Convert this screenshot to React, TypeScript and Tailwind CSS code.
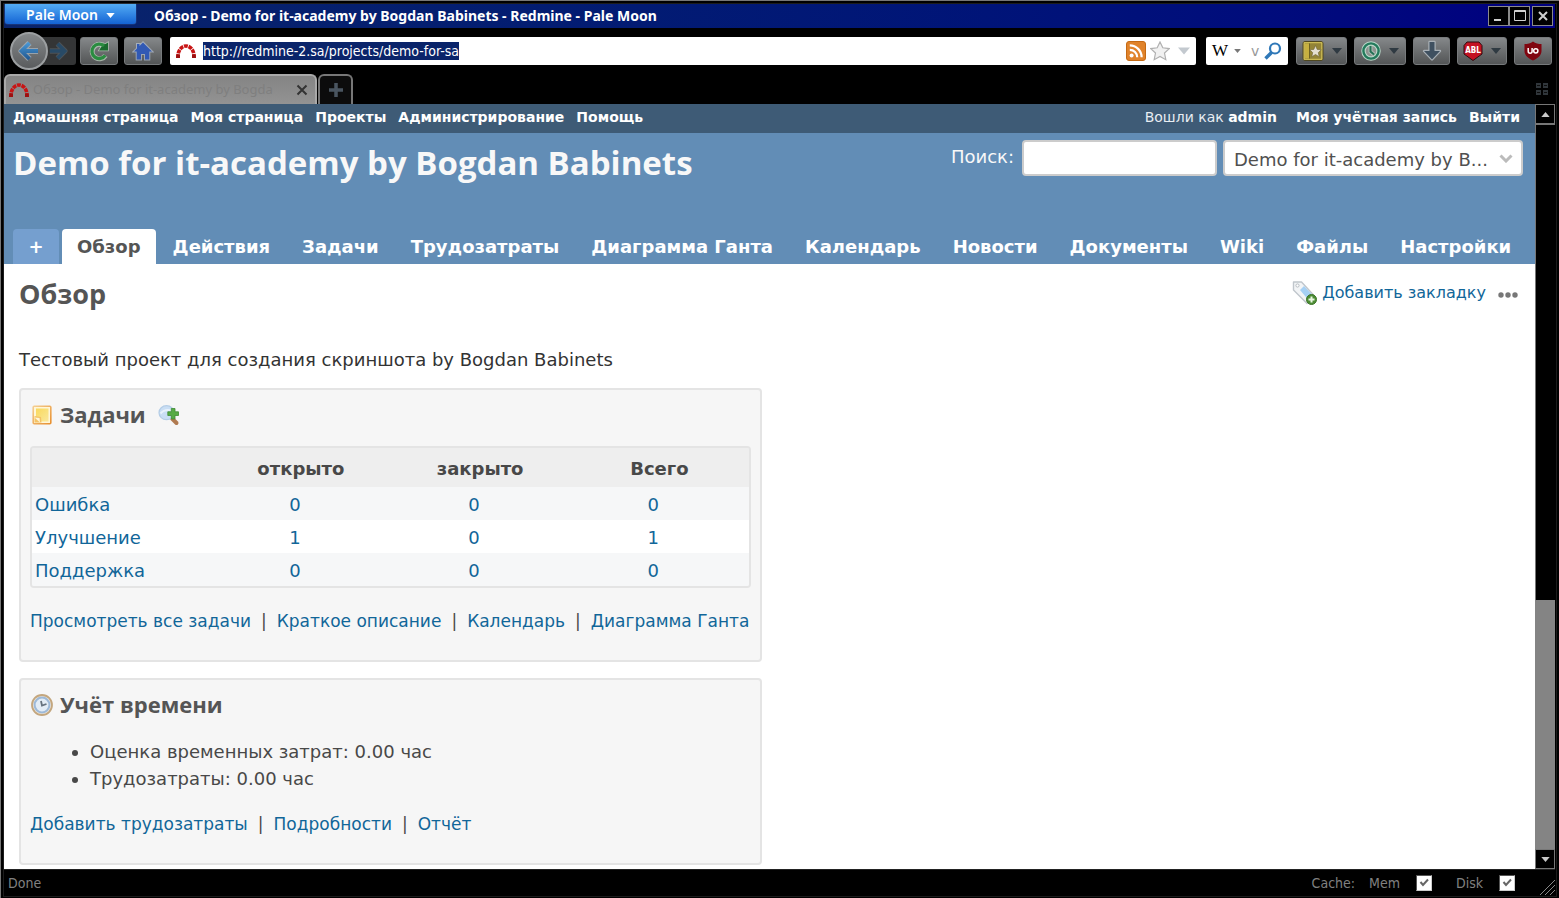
import type { ReactNode } from "react";

const toolButton =
  "flex h-7 items-center justify-center gap-2 rounded-[3px] border border-[#777a7c] bg-linear-to-b from-[#85888a] to-[#535556]";

function RedmineIcon() {
  return (
    <svg viewBox="0 0 20 14" className="h-[14px] w-5 shrink-0" fill="none">
      <path d="M2 14 V12 A8 10 0 0 1 18 12 V14" stroke="#c81414" strokeWidth="3.6" strokeDasharray="3.9 0.78" />
      <path d="M0 14l.3-3.600h3.700V14zM16 14v-3.600h3.700L20 14z" fill="#9c1010" />
    </svg>
  );
}

function Caret({ className }: { className: string }) {
  return (
    <svg viewBox="0 0 10 6" className={className}>
      <path d="M0 0h10L5 6z" fill="currentColor" />
    </svg>
  );
}

function ArrowIcon({ flip, className }: { flip?: boolean; className: string }) {
  const d = "M12.500 3 L4.500 11 L12.500 19 M5 11 H21";
  return (
    <svg viewBox="0 0 24 22" className={className} fill="none">
      <defs>
        <linearGradient id="arrow" gradientUnits="userSpaceOnUse" x1="0" y1="2" x2="0" y2="20">
          <stop offset="0" stopColor="#4a9ad8" />
          <stop offset="1" stopColor="#1f558e" />
        </linearGradient>
      </defs>
      <g transform={flip ? "matrix(-1 0 0 1 24 0)" : undefined}>
        <path d={d} stroke={flip ? "#66717a" : "#c3d4e2"} strokeWidth="6" strokeOpacity="0.5" strokeLinejoin="round" />
        <path d={d} stroke={flip ? "#284a66" : "url(#arrow)"} strokeWidth="3.800" />
      </g>
    </svg>
  );
}

function ReloadIcon() {
  return (
    <svg viewBox="0 0 22 22" className="size-[22px]" fill="none">
      <path d="M17.500 15.500 A7.200 7.200 0 1 1 14.500 5" stroke="#d5ead5" strokeOpacity="0.6" strokeWidth="5" />
      <path d="M11 10.500h9V2.500l-2.500 1.500-2-.5z" fill="#1a6a2e" stroke="#d5ead5" strokeOpacity="0.6" strokeWidth="1.600" paintOrder="stroke" />
      <path d="M17.200 15.300 A7.200 7.200 0 1 1 16 6" stroke="#2a8c40" strokeWidth="3.200" />
    </svg>
  );
}

function HomeIcon() {
  return (
    <svg viewBox="0 0 22 22" className="size-[22px]">
      <path
        d="M11 2.500 L20 11.500 H17.300 V19.500 H13 V14 H9 V19.500 H4.700 V11.500 H2 L5 8.500 V4 H7.500 V6 Z"
        fill="#3159b4"
        stroke="#c2cee2"
        strokeOpacity="0.6"
        strokeWidth="2"
        paintOrder="stroke"
      />
    </svg>
  );
}

function RssIcon() {
  return (
    <svg viewBox="0 0 20 20" className="size-5">
      <rect x="0.500" y="0.500" width="19" height="19" rx="2.500" fill="#e0832b" stroke="#c56a14" />
      <circle cx="5.600" cy="14.600" r="2" fill="#fff" />
      <path d="M3.800 8.800a7.400 7.400 0 0 1 7.400 7.400M3.800 4.400A11.800 11.800 0 0 1 15.600 16.200" fill="none" stroke="#fff" strokeWidth="2.200" />
    </svg>
  );
}

function StarIcon() {
  return (
    <svg viewBox="0 0 20 20" className="size-5">
      <path d="M10 1l2.800 5.800 6.400.8-4.700 4.400 1.300 6.700L10 15.400l-5.800 3.300L5.500 12 .8 7.600l6.400-.8z" fill="#f1f1f1" stroke="#b0b0b0" strokeWidth="1.200" />
    </svg>
  );
}

function LoupeIcon() {
  return (
    <svg viewBox="0 0 18 18" className="size-[18px]" fill="none" stroke="#2f78b8">
      <circle cx="11" cy="6.500" r="5" strokeWidth="2.200" />
      <path d="M7.500 10.500L1.500 16.500" strokeWidth="3.400" />
    </svg>
  );
}

function BookmarksIcon() {
  return (
    <svg viewBox="0 0 22 22" className="size-[22px]">
      <rect x="1" y="1.500" width="20" height="19" rx="2" fill="#938436" stroke="#4f4720" />
      <rect x="2.200" y="2.700" width="17.600" height="16.600" fill="none" stroke="#d8c75c" />
      <path d="M3 3.500h4v15H3z" fill="#c7b040" />
      <path d="M7.500 3.500v15" stroke="#6d6122" />
      <path d="M13.500 5.500l1.700 3.900 4.100.4-3 2.800.9 4.100-3.700-2.200-3.700 2.200.9-4.100-3-2.800 4.100-.4z" fill="#e4dfd0" stroke="#6d6336" strokeWidth="0.600" />
    </svg>
  );
}

function HistoryIcon() {
  return (
    <svg viewBox="0 0 20 20" className="size-5" fill="none">
      <circle cx="10" cy="10" r="7.500" fill="#8d9390" stroke="#b9d8c9" strokeWidth="4.500" />
      <circle cx="10" cy="10" r="7.600" stroke="#237a5c" strokeWidth="2.400" />
      <path d="M9.500 5v5.500l3.500 3" stroke="#c3dccf" strokeOpacity="0.6" strokeWidth="4" />
      <path d="M9.500 5v5.500l3.500 3" stroke="#237055" strokeWidth="2" />
    </svg>
  );
}

function DownloadIcon() {
  return (
    <svg viewBox="0 0 22 22" className="size-[22px]">
      <path d="M8.500 2h5v9H19l-8 8.500L3 11h5.500z" fill="#3f5060" stroke="#a9b0b6" strokeWidth="2.400" strokeLinejoin="round" paintOrder="stroke" />
    </svg>
  );
}

function AblIcon() {
  return (
    <svg viewBox="0 0 20 20" className="size-5">
      <path d="M4 1h12l3 3.500v8.500L10 19.500 1 13V4.500z" fill="#c41222" stroke="#2d0c0f" />
      <text x="10" y="11.500" textAnchor="middle" fontSize="8" fontWeight="700" fill="#fff" fontFamily="DejaVu Sans Condensed, DejaVu Sans, sans-serif">
        ABL
      </text>
    </svg>
  );
}

function ShieldIcon() {
  return (
    <svg viewBox="0 0 20 20" className="size-5">
      <path d="M10 .5c2.500 2 5.300 2.500 8.500 2.500v7c0 4.500-4 7.500-8.500 9.500-4.500-2-8.500-5-8.500-9.500V3C4.700 3 7.500 2.500 10 .5z" fill="#800610" />
      <path d="M5.200 7v3.300a1.900 1.900 0 0 0 3.900 0V7" fill="none" stroke="#fff" strokeWidth="1.500" />
      <circle cx="12.800" cy="9.800" r="2.100" fill="none" stroke="#fff" strokeWidth="1.500" />
    </svg>
  );
}

function TabGridIcon() {
  return (
    <svg viewBox="0 0 14 14" className="size-[14px]">
      <path d="M1 1h5v5H1zM8 1h5v5H8zM1 8h5v5H1zM8 8h5v5H8z" fill="#30363b" />
      <path d="M2 3.500h3M9 3.500h3M2 10.500h3M9 10.500h3" stroke="#0c0c0c" />
    </svg>
  );
}

function TagAddIcon() {
  return (
    <svg viewBox="0 0 26 26" className="size-[26px]">
      <path d="M1.500 2h8L21.500 15 15 23.500 1.500 10z" fill="#f2f4f6" stroke="#c0c6cc" strokeWidth="1.400" strokeLinejoin="round" />
      <path d="M8 10l4-4 8 8.500-4 5z" fill="#a5d0f4" />
      <circle cx="5.500" cy="5.500" r="1.600" fill="#fff" stroke="#b7bcc1" />
      <circle cx="19.500" cy="19.500" r="5" fill="#4c8c34" stroke="#3b7426" />
      <path d="M19.500 16.500v6M16.500 19.500h6" stroke="#e9f6e2" strokeWidth="2" />
    </svg>
  );
}

function NoteIcon() {
  return (
    <svg viewBox="0 0 20 20" className="size-5">
      <defs>
        <linearGradient id="note" x1="0" y1="0" x2="1" y2="1">
          <stop offset="0" stopColor="#f9d95c" />
          <stop offset="1" stopColor="#fae79a" />
        </linearGradient>
        <linearGradient id="note-edge" x1="0" y1="0" x2="1" y2="1">
          <stop offset="0" stopColor="#f5cf92" />
          <stop offset="1" stopColor="#e88f2e" />
        </linearGradient>
      </defs>
      <rect x="1.200" y="1.200" width="17.600" height="17.600" rx="1" fill="#fff6d8" stroke="url(#note-edge)" strokeWidth="1.600" />
      <path d="M4 3.500h12.500v13H9L4 11.500z" fill="url(#note)" />
      <path d="M2.500 11l6.500 1 .5 5.500H2.500z" fill="#f4c367" />
      <path d="M2.500 12.500l5 .5.500 4.500z" fill="#fff6d8" />
    </svg>
  );
}

function ZoomAddIcon() {
  return (
    <svg viewBox="0 0 22 22" className="size-[22px]">
      <path d="M14 14.500l4.500 4.500" stroke="#b07a50" strokeWidth="4" strokeLinecap="round" />
      <ellipse cx="8.500" cy="8.700" rx="7.500" ry="7" fill="#c9def4" stroke="#b4cde6" strokeWidth="1.200" />
      <path d="M2.500 9.500c3-3.500 7-4 11-3" stroke="#e8f2fc" strokeWidth="2" fill="none" />
      <path d="M13.300 4.500h3.700v3.300h3.500v3.700H17V15h-3.700v-3.500H9.800V7.800h3.500z" fill="#57ab45" stroke="#3f8c33" strokeWidth="0.800" />
    </svg>
  );
}

function ClockIcon() {
  return (
    <svg viewBox="0 0 24 24" className="size-6" fill="none">
      <circle cx="12" cy="12" r="10" fill="#ece6dc" stroke="#c3a67e" strokeWidth="1.800" />
      <circle cx="12" cy="12" r="7.400" fill="#e3ecf5" stroke="#9db9d8" strokeWidth="2" />
      <path d="M11 8l1 4.500 4.500-1.500" stroke="#66727e" strokeWidth="1.800" />
    </svg>
  );
}

function WindowButton({ label, children }: { label: string; children: ReactNode }) {
  return (
    <button aria-label={label} className="flex h-5 w-[21px] items-center justify-center border border-[#8a8a8a] bg-black">
      <svg viewBox="0 0 14 14" className="size-[14px]" fill="none" stroke="#d0d0d0">
        {children}
      </svg>
    </button>
  );
}

function TitleBar() {
  return (
    <header className="flex h-6 items-start bg-linear-to-r from-[#0a246a] to-[#000080] font-['Noto_Sans','Open_Sans',sans-serif] text-sm font-bold text-white">
      <button className="ml-px flex h-5 w-[131px] items-center justify-center gap-2 rounded-b-[3px] bg-linear-to-b from-[#53abf3] to-[#1463d4] pt-0.5 font-semibold shadow-[0_0_1px_#9cf]">
        Pale Moon
        <Caret className="h-[5px] w-[9px]" />
      </button>
      <p className="ml-[18px] min-w-0 flex-1 truncate leading-6">Обзор - Demo for it-academy by Bogdan Babinets - Redmine - Pale Moon</p>
      <div className="flex pt-0.5 pr-0.5">
        <WindowButton label="Свернуть">
          <path d="M2 11h7" strokeWidth="2" />
        </WindowButton>
        <WindowButton label="Развернуть">
          <path d="M1.500 1.500h11v10h-11zM1.500 2.500h11" />
        </WindowButton>
        <span className="w-0.5" />
        <WindowButton label="Закрыть">
          <path d="M3 3l8 8M11 3l-8 8" strokeWidth="2" />
        </WindowButton>
      </div>
    </header>
  );
}

function Toolbar() {
  return (
    <div className="flex h-[46px] items-center pr-[3px] pl-1.5">
      <div className="flex items-center">
        <button aria-label="Назад" className="z-10 flex size-[38px] items-center justify-center rounded-full border-2 border-[#9c9fa1] bg-linear-to-b from-[#85888a] to-[#5a5c5e]">
          <ArrowIcon className="h-[22px] w-6 shrink-0" />
        </button>
        <button aria-label="Вперёд" className="-ml-2 flex h-7 w-9 items-center justify-center rounded-r-[3px] bg-[#343536]">
          <ArrowIcon flip className="h-5 w-[22px]" />
        </button>
      </div>
      <button aria-label="Обновить" className={`${toolButton} ml-1 w-[38px]`}>
        <ReloadIcon />
      </button>
      <button aria-label="Домой" className={`${toolButton} ml-1.5 w-[38px]`}>
        <HomeIcon />
      </button>
      <div className="ml-2 flex h-7 min-w-0 flex-1 items-center rounded-xs bg-white px-1.5">
        <RedmineIcon />
        <input
          aria-label="Адрес"
          defaultValue="http://redmine-2.sa/projects/demo-for-sa"
          className="ml-[7px] field-sizing-content h-[18px] bg-[#0a246a] font-['DejaVu_Sans_Condensed','DejaVu_Sans',sans-serif] text-sm leading-[18px] text-white outline-none"
        />
        <span className="flex-1" />
        <button aria-label="RSS">
          <RssIcon />
        </button>
        <button aria-label="В закладки" className="ml-1">
          <StarIcon />
        </button>
        <button aria-label="Журнал адресов" className="ml-2 text-[#c3c9cf]">
          <Caret className="h-2 w-3" />
        </button>
      </div>
      <div className="ml-2.5 flex h-7 w-[82px] items-center rounded-xs bg-white px-1.5">
        <button aria-label="Выбор поиска" className="flex items-center gap-1.5 font-['Liberation_Serif',serif] text-[17px] text-black">
          W
          <span className="text-[#777]">
            <Caret className="h-1 w-[7px]" />
          </span>
        </button>
        <input aria-label="Поиск в Википедии" placeholder="v" className="ml-2.5 w-2.5 min-w-0 text-sm outline-none placeholder:text-[#999]" />
        <button aria-label="Найти" className="ml-1">
          <LoupeIcon />
        </button>
      </div>
      <div className="ml-2 flex gap-[7px] text-[#2f3a42]">
        <button aria-label="Закладки" className={`${toolButton} w-[51px]`}>
          <BookmarksIcon />
          <Caret className="h-1.5 w-2.5" />
        </button>
        <button aria-label="Журнал" className={`${toolButton} w-[52px]`}>
          <HistoryIcon />
          <Caret className="h-1.5 w-2.5" />
        </button>
        <button aria-label="Загрузки" className={`${toolButton} w-[37px]`}>
          <DownloadIcon />
        </button>
        <button aria-label="Adblock Latitude" className={`${toolButton} w-[50px]`}>
          <AblIcon />
          <Caret className="h-1.5 w-2.5" />
        </button>
        <button aria-label="uBlock Origin" className={`${toolButton} w-[38px]`}>
          <ShieldIcon />
        </button>
      </div>
    </div>
  );
}

function TabStrip() {
  return (
    <div className="flex h-[30px] items-end gap-px pr-1.5">
      <div className="flex h-[30px] w-[313px] items-center rounded-t-md border-2 border-b-0 border-[#a9a9a9] bg-linear-to-b from-[#848484] to-[#939393] px-[3px]">
        <RedmineIcon />
        <span className="ml-1 flex-1 font-['Noto_Sans','Open_Sans',sans-serif] text-[13px] whitespace-nowrap text-[#7f7f7f]">Обзор - Demo for it-academy by Bogda</span>
        <button aria-label="Закрыть вкладку" className="mr-1">
          <svg viewBox="0 0 12 12" className="size-3" stroke="#333" strokeWidth="2">
            <path d="M1.500 1.500l9 9M10.500 1.500l-9 9" />
          </svg>
        </button>
      </div>
      <button aria-label="Новая вкладка" className="flex h-[30px] w-[35px] items-center justify-center rounded-t-md border-2 border-b-0 border-[#777] bg-[#0c0c0c]">
        <svg viewBox="0 0 14 14" className="size-[14px]" stroke="#4a5560" strokeWidth="3.500">
          <path d="M7 0v14M0 7h14" />
        </svg>
      </button>
      <span className="flex-1" />
      <button aria-label="Все вкладки" className="mb-2">
        <TabGridIcon />
      </button>
    </div>
  );
}

function TopMenu() {
  return (
    <div className="flex h-[29px] items-center justify-between bg-[#3e5b76] pr-[15px] pb-[3px] pl-[9px] text-sm text-white">
      <nav className="flex gap-3 font-bold">
        {["Домашняя страница", "Моя страница", "Проекты", "Администрирование", "Помощь"].map((item) => (
          <a key={item} href="#">
            {item}
          </a>
        ))}
      </nav>
      <div className="flex gap-3">
        <span className="mr-[7px] text-[#e8eef3]">
          Вошли как{" "}
          <a href="#" className="font-bold text-white">
            admin
          </a>
        </span>
        <a href="#" className="font-bold">
          Моя учётная запись
        </a>
        <a href="#" className="font-bold">
          Выйти
        </a>
      </div>
    </div>
  );
}

function ProjectHeader() {
  const tabs = ["Действия", "Задачи", "Трудозатраты", "Диаграмма Ганта", "Календарь", "Новости", "Документы", "Wiki", "Файлы", "Настройки"];
  return (
    <header className="flex h-[131px] flex-col justify-between bg-[#628db6] pl-[9px] text-white">
      <div className="flex items-start justify-between pt-[7px] pr-3">
        <h1 className="font-['Open_Sans',sans-serif] text-[33px] leading-[46px] font-bold text-[#f8f8f8]">Demo for it-academy by Bogdan Babinets</h1>
        <form className="flex items-start gap-1.5 text-lg">
          <label htmlFor="q" className="mr-0.5 leading-[34px] text-[#f8f8f8]">
            Поиск:
          </label>
          <input id="q" className="h-9 w-[195px] rounded-[4px] border-2 border-[#ccc] bg-white px-2 text-[#505050] outline-none" />
          <div className="relative">
            <select aria-label="Перейти к проекту" className="h-9 w-[300px] appearance-none truncate rounded-[4px] border-2 border-[#ccc] bg-white pt-[3px] pr-8 pl-[9px] text-[#505050]">
              <option>Demo for it-academy by B...</option>
            </select>
            <svg viewBox="0 0 14 9" className="pointer-events-none absolute top-[14px] right-2.5 h-[9px] w-[14px]" fill="none" stroke="#bbb" strokeWidth="3">
              <path d="M1.500 1.500L7 7l5.500-5.500" />
            </svg>
          </div>
        </form>
      </div>
      <nav className="flex gap-0.5 text-lg leading-[35px] font-bold whitespace-nowrap">
        <button aria-label="Создать" className="mr-px w-[46px] rounded-t-[4px] bg-[#759fcf]">
          +
        </button>
        <a href="#" className="rounded-t-[4px] bg-white px-[15px] text-[#555]">
          Обзор
        </a>
        {tabs.map((tab) => (
          <a key={tab} href="#" className="px-[15px]">
            {tab}
          </a>
        ))}
      </nav>
    </header>
  );
}

function LinkRow({ links }: { links: string[] }) {
  return (
    <p className="text-[17px] leading-[27px] whitespace-nowrap">
      {links.map((link, i) => (
        <span key={link}>
          {i > 0 && <span className="px-2.5">|</span>}
          <a href="#" className="text-[#169]">
            {link}
          </a>
        </span>
      ))}
    </p>
  );
}

const trackers = [
  { name: "Ошибка", counts: [0, 0, 0] },
  { name: "Улучшение", counts: [1, 0, 1] },
  { name: "Поддержка", counts: [0, 0, 0] },
];

function IssuesBox() {
  return (
    <section className="rounded-[4px] border-2 border-[#e4e4e4] bg-[#f6f6f6] px-[9px] pt-2 pb-[25px]">
      <h3 className="flex h-[33px] items-center font-['Open_Sans',sans-serif] text-[22px] font-bold text-[#555]">
        <span className="mr-2 ml-0.5">
          <NoteIcon />
        </span>
        Задачи
        <a href="#" aria-label="Подробности" className="ml-3">
          <ZoomAddIcon />
        </a>
      </h3>
      <div className="mt-[15px] overflow-hidden rounded-[4px] border-2 border-[#e4e4e4]">
        <table className="w-full table-fixed border-collapse text-lg">
          <thead className="bg-[#eee]">
            <tr className="h-[39px]">
              <th aria-label="Трекер" />
              <th className="pt-0.5">открыто</th>
              <th className="pt-0.5">закрыто</th>
              <th className="pt-0.5">Всего</th>
            </tr>
          </thead>
          <tbody>
            {trackers.map((t) => (
              <tr key={t.name} className="h-[33px] odd:bg-[#f6f7f8] even:bg-white">
                <td className="pt-0.5 pl-[3px]">
                  <a href="#" className="text-[#169]">
                    {t.name}
                  </a>
                </td>
                {t.counts.map((count, i) => (
                  <td key={i} className="pt-0.5 pr-3 text-center">
                    <a href="#" className="text-[#169]">
                      {count}
                    </a>
                  </td>
                ))}
              </tr>
            ))}
          </tbody>
        </table>
      </div>
      <div className="mt-5">
        <LinkRow links={["Просмотреть все задачи", "Краткое описание", "Календарь", "Диаграмма Ганта"]} />
      </div>
    </section>
  );
}

function TimeBox() {
  return (
    <section className="rounded-[4px] border-2 border-[#e4e4e4] bg-[#f6f6f6] px-[9px] pt-2 pb-[25px]">
      <h3 className="flex h-[33px] items-center font-['Open_Sans',sans-serif] text-[22px] font-bold text-[#555]">
        <span className="mr-1.5">
          <ClockIcon />
        </span>
        Учёт времени
      </h3>
      <ul className="mt-[17px] list-disc pl-[60px] text-lg leading-[27px]">
        <li>Оценка временных затрат: 0.00 час</li>
        <li>Трудозатраты: 0.00 час</li>
      </ul>
      <div className="mt-[19px]">
        <LinkRow links={["Добавить трудозатраты", "Подробности", "Отчёт"]} />
      </div>
    </section>
  );
}

function ProjectPage() {
  return (
    <main className="flex-1 bg-white px-[15px] pb-1 text-[#484848]">
      <div className="flex h-[50px] items-start justify-between pt-2">
        <h2 className="pt-1 font-['Open_Sans',sans-serif] text-[27px] leading-9 font-bold text-[#555]">Обзор</h2>
        <div className="flex items-center pt-2 pr-0.5">
          <a href="#" className="flex items-center gap-1 text-base text-[#169]">
            <TagAddIcon />
            Добавить закладку
          </a>
          <button aria-label="Действия" className="mt-1 ml-3">
            <svg viewBox="0 0 20 6" className="h-1.5 w-5" fill="#777">
              <circle cx="3" cy="3" r="2.700" />
              <circle cx="10" cy="3" r="2.700" />
              <circle cx="17" cy="3" r="2.700" />
            </svg>
          </button>
        </div>
      </div>
      <p className="mt-8 text-lg leading-[27px] text-[#333]">Тестовый проект для создания скриншота by Bogdan Babinets</p>
      <div className="mt-[15px] flex w-[49.5%] flex-col gap-4">
        <IssuesBox />
        <TimeBox />
      </div>
    </main>
  );
}

function ScrollArrow({ up }: { up?: boolean }) {
  return (
    <button aria-label={up ? "Вверх" : "Вниз"} className="flex h-5 items-center justify-center border border-[#777] bg-black text-[#c9c9c9]">
      <Caret className={up ? "h-[5px] w-[9px] rotate-180" : "h-[5px] w-[9px]"} />
    </button>
  );
}

function Scrollbar() {
  return (
    <div className="flex w-5 flex-col bg-[#848484]">
      <ScrollArrow up />
      <div className="h-[62.200%] border-t border-l border-[#777] bg-black" />
      <span className="flex-1" />
      <ScrollArrow />
    </div>
  );
}

function CacheToggle({ label }: { label: string }) {
  return (
    <label className="flex items-center">
      {label}
      <span className="relative ml-4 flex">
        <input type="checkbox" defaultChecked className="size-4 appearance-none border border-t-[#555] border-r-[#ccc] border-b-[#ccc] border-l-[#555] bg-white" />
        <svg viewBox="0 0 16 16" className="pointer-events-none absolute inset-0 size-4" fill="none" stroke="#666" strokeWidth="2">
          <path d="M4.500 7l2.500 3 5-5.500" />
        </svg>
      </span>
    </label>
  );
}

function StatusBar() {
  return (
    <footer className="flex h-[27px] items-center border-t border-[#222] pl-1 font-['DejaVu_Sans_Condensed','DejaVu_Sans',sans-serif] text-sm text-[#808080]">
      <span className="flex-1">Done</span>
      <span className="mr-3.5">Cache:</span>
      <CacheToggle label="Mem" />
      <span className="w-6" />
      <CacheToggle label="Disk" />
      <svg viewBox="0 0 16 16" className="mt-2 ml-6 size-4" stroke="#888">
        <path d="M1 16L16 1M6 16L16 6M11 16l5-5" />
      </svg>
    </footer>
  );
}

export default function App() {
  return (
    <div className="flex min-h-screen flex-col border-t border-l border-[#777] bg-black p-0.5 font-['DejaVu_Sans',sans-serif]">
      <div className="flex flex-1 flex-col border border-[#1c1c1c] pr-px">
        <TitleBar />
        <Toolbar />
        <TabStrip />
        <div className="flex flex-1">
          <div className="flex min-w-0 flex-1 flex-col">
            <TopMenu />
            <ProjectHeader />
            <ProjectPage />
          </div>
          <Scrollbar />
        </div>
        <StatusBar />
      </div>
    </div>
  );
}
